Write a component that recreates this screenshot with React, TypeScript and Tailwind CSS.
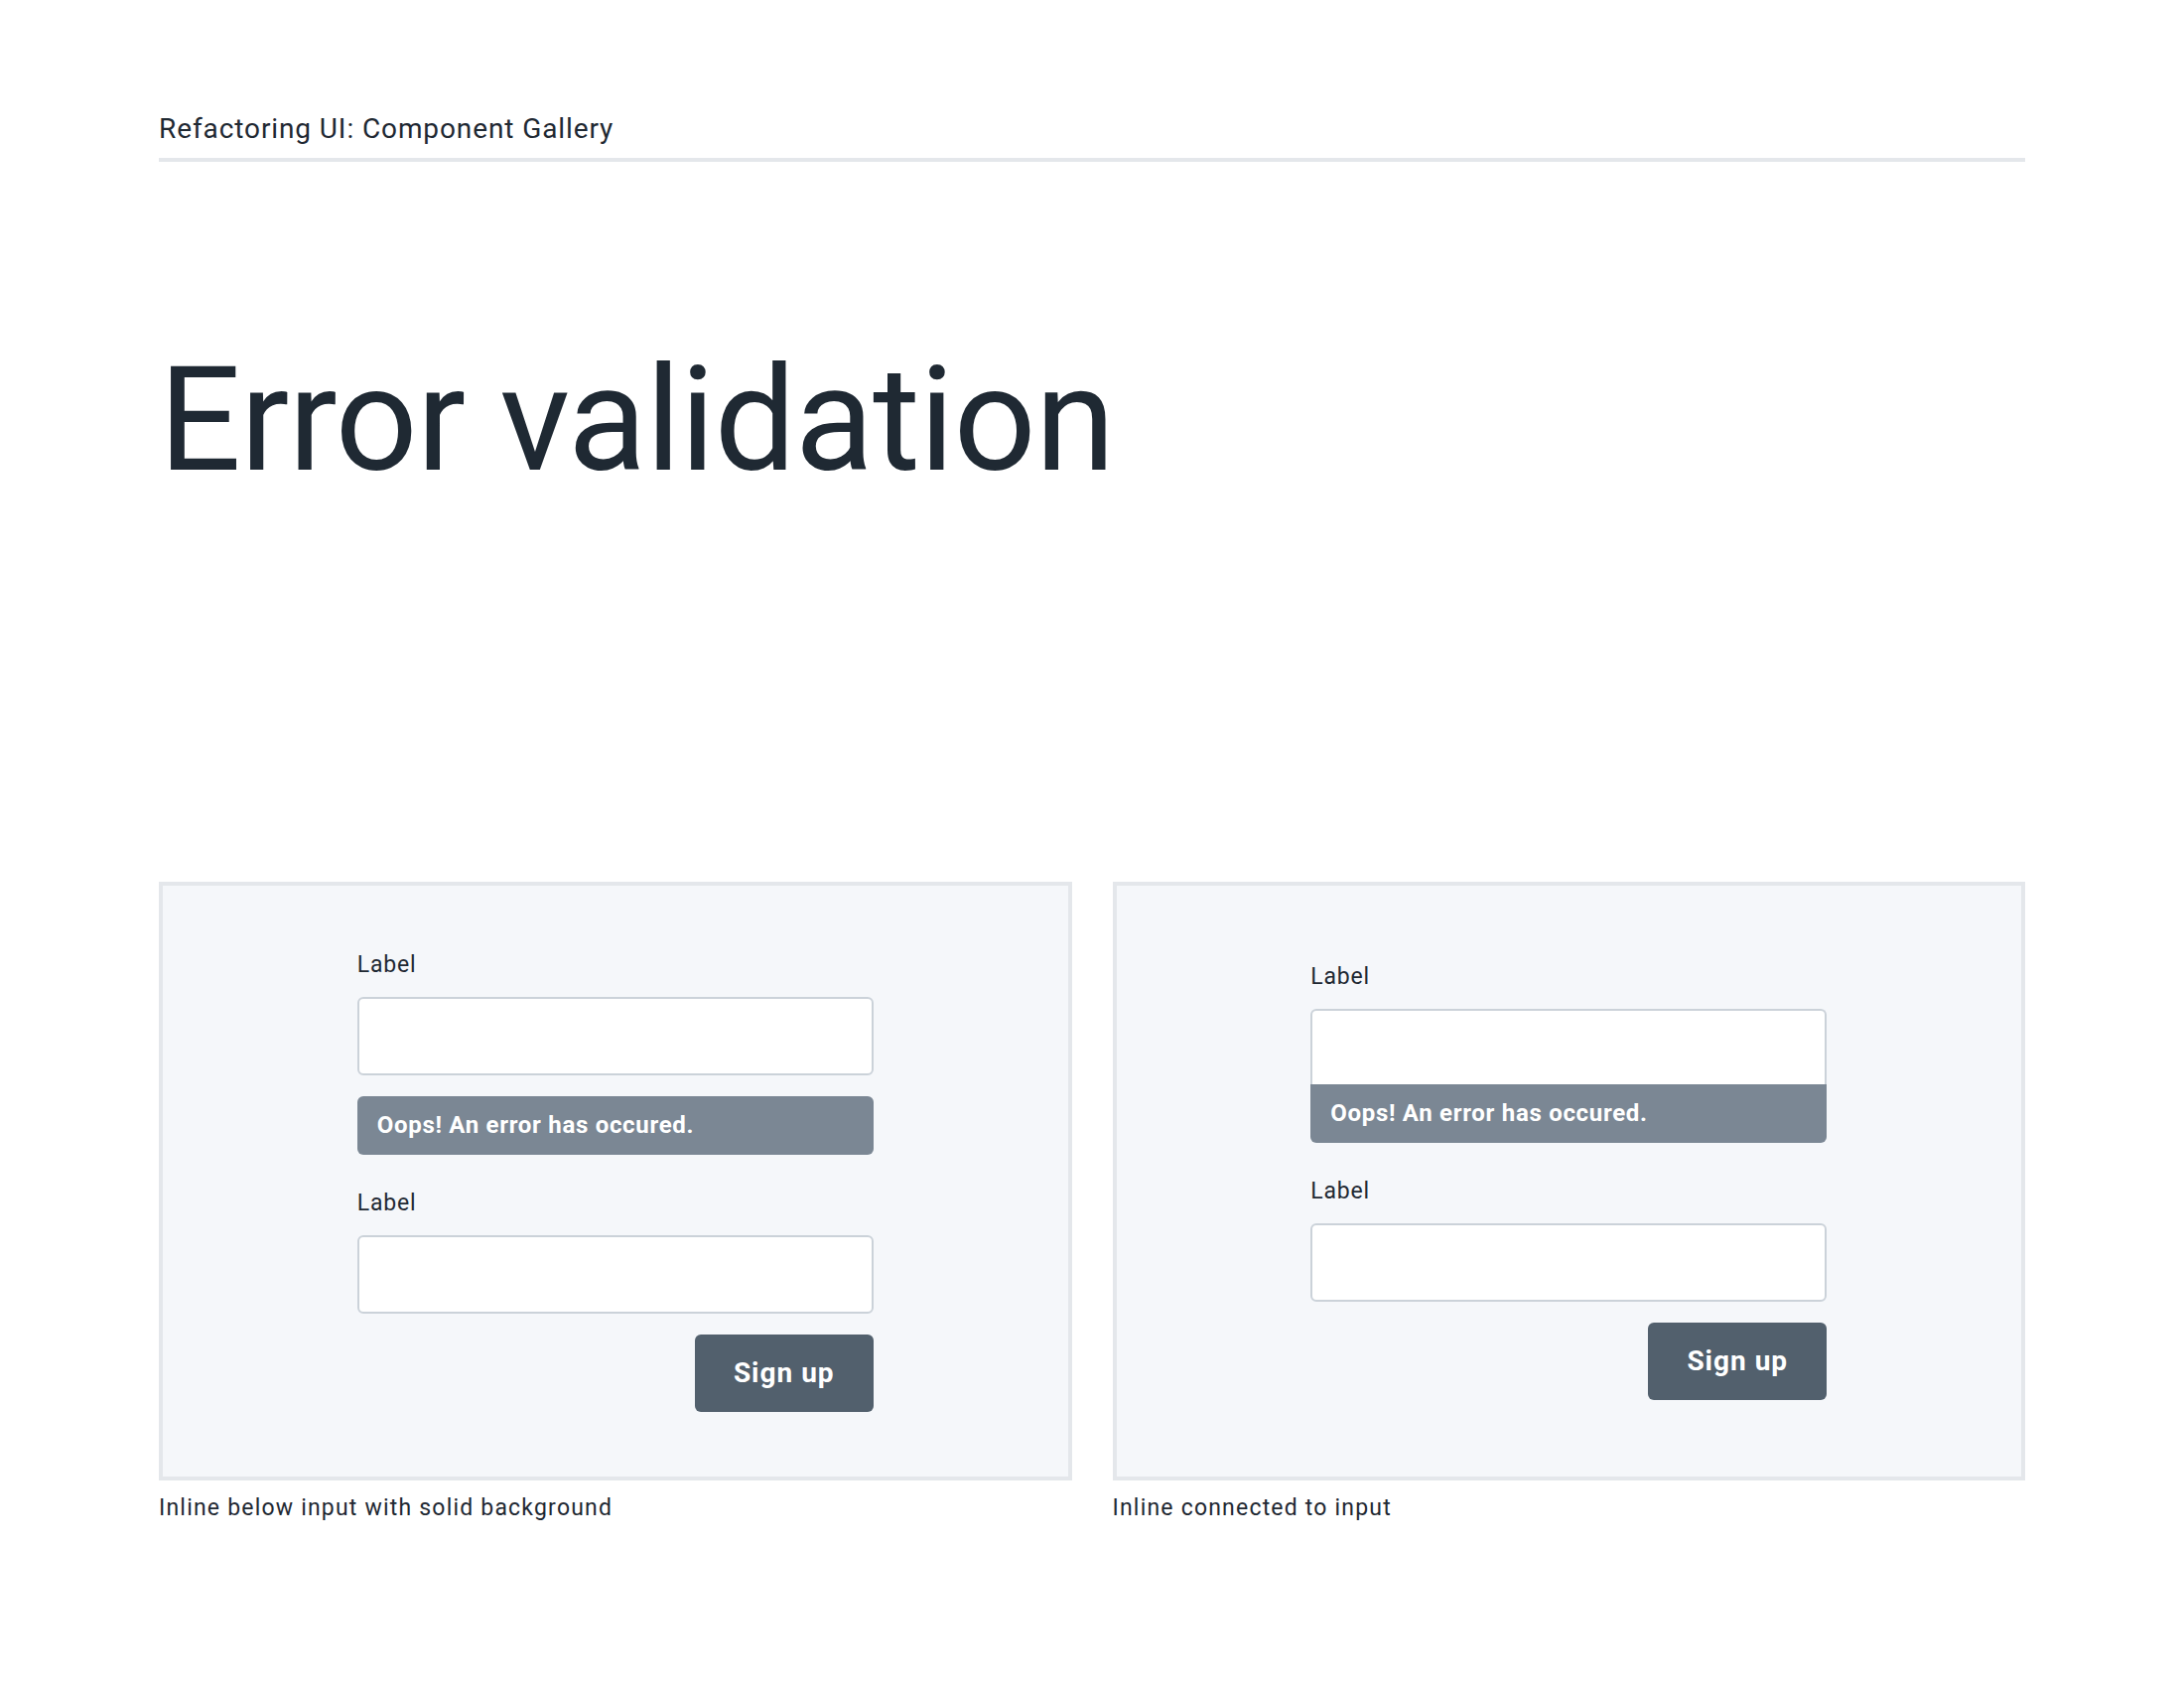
export default function App() {
  return (
    <div className="min-h-screen w-full bg-white px-[160px] text-[#1f2933]" style={{ fontFamily: "Roboto, 'Liberation Sans', sans-serif" }}>
      <header className="border-b-4 border-[#e4e7eb] pt-[113px] pb-[12px]">
        <div className="text-[28px] leading-[34px] tracking-[0.9px]">Refactoring UI: Component Gallery</div>
      </header>

      <h1 className="mt-[188px] text-[146px] leading-none tracking-[-1px]">Error validation</h1>

      <div className="mt-[391px] grid grid-cols-2 gap-[41px]">
        <div>
          <div className="flex h-[603px] items-center justify-center border-4 border-[#e4e7eb] bg-[#f5f7fa]">
            <div className="flex w-[520px] flex-col">
              <Label />
              <Input />
              <div className="mt-[21px] flex h-[59px] items-center rounded-md bg-[#7b8794] px-5 text-[24px] font-bold tracking-[0.7px] text-white">
                Oops! An error has occured.
              </div>
              <div className="mt-[35px]">
                <Label />
              </div>
              <Input />
              <SignUp />
            </div>
          </div>
          <p className="mt-[14px] text-[23px] leading-[28px] tracking-[1.2px]">Inline below input with solid background</p>
        </div>

        <div>
          <div className="flex h-[603px] items-center justify-center border-4 border-[#e4e7eb] bg-[#f5f7fa]">
            <div className="flex w-[520px] flex-col">
              <Label />
              <div className="mt-[18px] flex flex-col">
                <div className="h-[76px] rounded-t-md border-2 border-b-0 border-[#cbd2d9] bg-white" />
                <div className="flex h-[59px] items-center rounded-b-md bg-[#7b8794] px-5 text-[24px] font-bold tracking-[0.7px] text-white">
                  Oops! An error has occured.
                </div>
              </div>
              <div className="mt-[35px]">
                <Label />
              </div>
              <Input />
              <SignUp />
            </div>
          </div>
          <p className="mt-[14px] text-[23px] leading-[28px] tracking-[1.2px]">Inline connected to input</p>
        </div>
      </div>
    </div>
  );
}

function Label() {
  return <label className="block text-[23px] leading-[28px] tracking-[0.8px] text-[#1f2933]">Label</label>;
}

function Input() {
  return <div className="mt-[18px] h-[79px] rounded-md border-2 border-[#cbd2d9] bg-white" />;
}

function SignUp() {
  return (
    <div className="mt-[21px] flex justify-end">
      <button className="flex h-[78px] w-[180px] items-center justify-center rounded-md bg-[#52606d] text-[28px] font-bold tracking-[1px] text-white">
        Sign up
      </button>
    </div>
  );
}
